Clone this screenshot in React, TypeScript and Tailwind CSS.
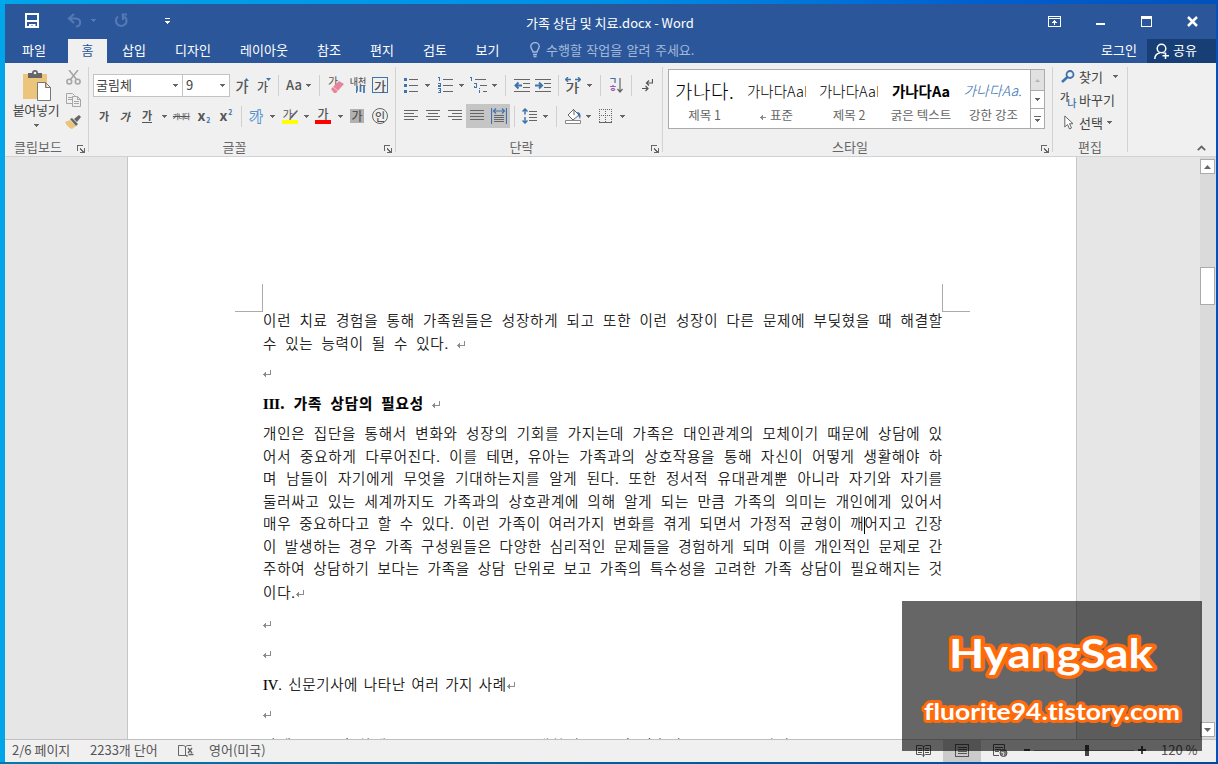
import type { ReactNode } from "react";

const GRAY = "#666666";
const BLUE = "#3f73ab";

const tabs = [
  { label: "삽입", width: "w-[52px]" },
  { label: "디자인", width: "w-[66px]" },
  { label: "레이아웃", width: "w-[76px]" },
  { label: "참조", width: "w-[54px]" },
  { label: "편지", width: "w-[52px]" },
  { label: "검토", width: "w-[54px]" },
  { label: "보기", width: "w-[51px]" },
];

const bodyLines = [
  "개인은 집단을 통해서 변화와 성장의 기회를 가지는데 가족은 대인관계의 모체이기 때문에 상담에 있",
  "어서 중요하게 다루어진다. 이를 테면, 유아는 가족과의 상호작용을 통해 자신이 어떻게 생활해야 하",
  "며 남들이 자기에게 무엇을 기대하는지를 알게 된다. 또한 정서적 유대관계뿐 아니라 자기와 자기를",
  "둘러싸고 있는 세계까지도 가족과의 상호관계에 의해 알게 되는 만큼 가족의 의미는 개인에게 있어서",
  "매우 중요하다고 할 수 있다. 이런 가족이 여러가지 변화를 겪게 되면서 가정적 균형이 깨|어지고 긴장",
  "이 발생하는 경우 가족 구성원들은 다양한 심리적인 문제들을 경험하게 되며 이를 개인적인 문제로 간",
  "주하여 상담하기 보다는 가족을 상담 단위로 보고 가족의 특수성을 고려한 가족 상담이 필요해지는 것",
];

// One slot of a ribbon row, its content is centered
const Cell = ({ w, className = "", children }: { w: string; className?: string; children?: ReactNode }) => (
  <div className={`flex h-[24px] shrink-0 items-center justify-center whitespace-nowrap ${w} ${className}`}>
    {children}
  </div>
);

const Arrow = ({ color = GRAY }: { color?: string }) => (
  <svg width="5" height="3" className="shrink-0" shapeRendering="crispEdges">
    <path d="M0 0h5v1H0zM1 1h3v1H1zM2 2h1v1H2z" fill={color} />
  </svg>
);

const Divider = ({ w }: { w: string }) => (
  <Cell w={w}>
    <div className="h-[21px] w-px bg-[#d0d0d0]" />
  </Cell>
);

const GroupLine = () => <div className="mt-1 h-[85px] w-px shrink-0 bg-[#d2d2d2]" />;

const Launcher = ({ className }: { className: string }) => (
  <svg width="8" height="8" className={`mt-1 shrink-0 ${className}`} shapeRendering="crispEdges">
    <path d="M0.5 6V0.5H6" fill="none" stroke={GRAY} />
    <path d="M3 3h1v1h1v1h1v1h1V3h1v5H3V7h2V6H4V5H3z" fill={GRAY} />
  </svg>
);

// Group caption with its dialog launcher at the right
const GroupLabel = ({ text }: { text: string }) => (
  <div className="mt-1.5 flex h-5 items-center text-[#666]">
    <div className="flex-1 pr-[4px] text-center">{text}</div>
    <Launcher className="mr-[3px]" />
  </div>
);

const Lines = ({ rows }: { rows: [number, number][] }) => (
  <svg width="15" height="13" className="shrink-0" shapeRendering="crispEdges">
    {rows.map(([x, width], i) => (
      <rect key={i} x={x} y={i * 3} width={width} height="1" fill={GRAY} />
    ))}
  </svg>
);

const ReturnMark = ({ className = "" }: { className?: string }) => (
  <svg width="8" height="8" className={`inline-block shrink-0 ${className}`} shapeRendering="crispEdges">
    <path d="M7 0h1v5H7zM1 4h6v1H1zM1 3h2v3H1zM0 4h1v1H0zM2 2h1v5H2z" fill="#8c8c8c" />
  </svg>
);

const Indent = ({ out = false }: { out?: boolean }) => (
  <svg width="17" height="15" className="shrink-0">
    <path d="M0 1.5h16M9 5.5h7M9 9.5h7M0 13.5h16" stroke={GRAY} shapeRendering="crispEdges" />
    <path d={out ? "M8 7.5H2M4.5 4.5l-3 3 3 3" : "M0 7.5h6M4 4.5l3 3-3 3"} stroke={BLUE} strokeWidth="2" fill="none" />
  </svg>
);

const TitleBar = () => (
  <div className="flex h-[35px] shrink-0 items-start text-white">
    <div className="flex w-[170px] items-center pt-[9px] pl-[20px]">
      <svg width="14" height="15" className="shrink-0">
        <path d="M1 1h12v13H1z" fill="none" stroke="#fff" strokeWidth="2" />
        <path d="M2 7h10v2H2zM4 11h6.5v3H8v-1.500H6V14H4z" fill="#fff" />
      </svg>
      <svg width="16" height="15" className="ml-[28px] shrink-0" fill="none" stroke="#5378b4" strokeWidth="2.2">
        <path d="M7 1L2 5.5 7 10M2 5.5h7c5.5 0 5.5 8 0 8" />
      </svg>
      <div className="ml-[8px]">
        <Arrow color="#5378b4" />
      </div>
      <svg width="15" height="15" className="ml-[18px] shrink-0" fill="none" stroke="#5378b4" strokeWidth="2.2">
        <path d="M10.5 3.5A5.3 5.3 0 1 1 4 3.5M7.5 1.5H13M9 1.5V7" />
      </svg>
      <svg width="6" height="6" className="ml-[36px] shrink-0" shapeRendering="crispEdges">
        <path d="M0 0h5v1H0zM0 3h5v1H0zM1 4h3v1H1zM2 5h1v1H2z" fill="#fff" />
      </svg>
    </div>
    <div className="flex-1 pt-[10px] pl-[351px] text-[13px] leading-[18px] whitespace-nowrap">
      가족 상담 및 치료.docx - Word
    </div>
    <div className="flex items-center gap-[35px] pt-[12px] pr-[18px]">
      <svg width="13" height="11" shapeRendering="crispEdges">
        <path d="M.5.5h12v10H.5zM1 2.5h11M6.5 9V4M4 6.5h5M5 5.5h3" fill="none" stroke="#fff" />
      </svg>
      <div className="mt-[4px] h-[2px] w-[9px] bg-white" />
      <div className="ml-px h-[11px] w-[11px] border border-t-[3px] border-white" />
      <svg width="11" height="11" stroke="#fff" strokeWidth="2.5">
        <path d="M1 1l9 9M10 1l-9 9" />
      </svg>
    </div>
  </div>
);

const TabBar = () => (
  <div className="flex h-6 shrink-0 items-stretch text-[13px] leading-[21px] text-white">
    <div className="w-[63px] pr-[5px] text-center">파일</div>
    <div className="mr-px w-[39px] bg-[#f0f0f0] text-center text-[#2b579a]">홈</div>
    {tabs.map((tab) => (
      <div key={tab.label} className={`${tab.width} text-center whitespace-nowrap`}>
        {tab.label}
      </div>
    ))}
    <div className="flex items-start pl-[17px] text-[#a5badb]">
      <svg width="10" height="16" className="mt-[3px]" fill="none" stroke="#a5badb" strokeWidth="1.4">
        <path d="M3 10C3 8 .8 7 .8 4.6a4.2 4 0 0 1 8.4 0C9.2 7 7 8 7 10zM3 12.5h4M3.5 14.5h3" />
      </svg>
      <span className="ml-[6px] [word-spacing:1.5px]">수행할 작업을 알려 주세요.</span>
    </div>
    <div className="ml-auto pr-[10px]">로그인</div>
    <div className="flex w-[69px] items-start bg-[#173f76] pl-[7px]">
      <svg width="16" height="17" className="mt-[4px]" fill="none" stroke="#fff" strokeWidth="1.5">
        <circle cx="7.5" cy="5.5" r="4.3" />
        <path d="M.8 16c0-3 2-5.5 5-6M9 9.5l1.5 1M11.5 9.5V16M8.5 12.8H15" />
      </svg>
      <span className="ml-[3px]">공유</span>
    </div>
  </div>
);

const ClipboardGroup = () => (
  <div className="w-[83px] shrink-0 pt-[7px]">
    <div className="flex h-[61px]">
      <div className="flex w-[57px] flex-col items-center pl-[5px] text-[#444]">
        <svg width="29" height="31" className="mr-[-3px] shrink-0">
          <path d="M0 4h24v25H0z" fill="#ecc57c" />
          <path d="M5 3h4a3 3 0 0 1 6 0h4v5H5z" fill="#666" />
          <circle cx="12" cy="3" r="1.3" fill="#f0f0f0" />
          <path d="M14.5 12.5h8l5 5v13h-13zM22.5 12.5v5h5" fill="#fff" stroke="#777" />
        </svg>
        <span className="text-[13px] leading-[18px] tracking-[-0.3px] whitespace-nowrap">붙여넣기</span>
        <div className="mt-[5px]">
          <Arrow />
        </div>
      </div>
      <div className="flex flex-1 flex-col items-center pr-[4px]">
        <svg width="15" height="15" className="shrink-0" fill="none" stroke="#a6a6a6" strokeWidth="1.6">
          <path d="M3 0l7.5 9.5M12 0L4.5 9.5" />
          <circle cx="3.3" cy="11.6" r="2.4" />
          <circle cx="11.7" cy="11.6" r="2.4" />
        </svg>
        <svg width="15" height="14" className="mt-[8px] shrink-0" fill="#f0f0f0" stroke="#a6a6a6">
          <path d="M.5.5h6l2 2v8h-8zM2 4.5h4M2 6.5h4" />
          <path d="M6.5 3.5h5l3 3v7h-8zM11.5 3.5v3h3M8 8.5h5M8 10.5h5" />
        </svg>
        <svg width="16" height="14" className="mt-[8px] shrink-0">
          <path d="M0 7l5-2 6 6-4 3C4 13 1 10 0 7z" fill="#ecc57c" />
          <path d="M5 4l2-1 6 6-2 2zM9 4l5-4 2 2-4 5z" fill="#666" />
        </svg>
      </div>
    </div>
    <div className="mt-[6px] flex h-5 items-center text-[13px]">
      <div className="w-[66px] text-center text-[#666]">클립보드</div>
      <Launcher className="ml-[6px]" />
    </div>
  </div>
);

const FontGroup = () => (
  <div className="w-[306px] shrink-0 pt-[7px] text-[#555]">
    <div className="flex h-[30px] items-center pl-[4px]">
      <div className="flex h-[23px] w-[90px] items-center justify-between border border-[#c3c3c3] bg-white pr-[4px] pl-[2px] text-[13px] text-[#444]">
        굴림체
        <Arrow />
      </div>
      <div className="flex h-[23px] w-[47px] items-center justify-between border border-l-0 border-[#c3c3c3] bg-white pr-[4px] pl-[3px] text-[13px] text-[#444]">
        9
        <Arrow />
      </div>
      <Cell w="w-[22px]" className="text-[14px] font-medium">
        <span className="mt-[2px] ml-[3px]">가</span>
        <svg width="5" height="3" className="mb-[12px] ml-[-4px] shrink-0">
          <path d="M0 3h5L2.5 0z" fill={BLUE} />
        </svg>
      </Cell>
      <Cell w="w-[22px]" className="text-[12px] font-medium">
        <span className="mt-[3px] ml-[2px]">가</span>
        <svg width="5" height="3" className="mb-[12px] ml-[-2px] shrink-0">
          <path d="M0 0h5L2.5 3z" fill={BLUE} />
        </svg>
      </Cell>
      <Divider w="w-[9px]" />
      <Cell w="w-[20px]" className="pl-[2px] text-[13px] font-medium">Aa</Cell>
      <Cell w="w-[10px]"><Arrow /></Cell>
      <Divider w="w-[12px]" />
      <Cell w="w-[22px]" className="text-[11px]">
        <span className="mb-[7px]">가</span>
        <svg width="13" height="12" className="mt-1 ml-[-7px] shrink-0">
          <path d="M0 8l8-8 5 3-8 9H3z" fill="#e8849a" />
          <path d="M2 6l5 4" stroke="#f6c3cd" />
        </svg>
      </Cell>
      <Cell w="w-[22px]" className="flex-col">
        <span className="text-[9px] leading-[9px] font-medium">내천</span>
        <svg width="9" height="7" className="ml-[4px]">
          <path d="M1 0v4l-1 3M4.5 0v6M8 0v7" stroke={BLUE} strokeWidth="1.7" fill="none" />
        </svg>
      </Cell>
      <Cell w="w-[22px]">
        <div className="flex h-4 w-4 shrink-0 items-center justify-center border border-[#3f73ab] text-[13px] leading-none font-medium">가</div>
      </Cell>
    </div>
    <div className="mt-px flex h-[30px] items-center pl-[4px] text-[11px]">
      <Cell w="w-[22px]" className="font-bold">가</Cell>
      <Cell w="w-[22px]" className="font-bold"><span className="skew-x-[-14deg]">가</span></Cell>
      <Cell w="w-[20px]" className="font-bold">
        <span className="border-b border-[#555] leading-[13px]">가</span>
      </Cell>
      <Cell w="w-[14px]"><Arrow /></Cell>
      <Cell w="w-[20px]" className="text-[7px] font-medium tracking-[-1px]">
        <span className="line-through">가나다</span>
      </Cell>
      <Cell w="w-[24px]" className="pl-[2px] font-bold">
        <span className="mb-[2px] text-[14px]">x</span>
        <span className="mt-[8px] ml-px text-[7px] text-[#3f73ab]">2</span>
      </Cell>
      <Cell w="w-[22px]" className="font-bold">
        <span className="mb-[2px] text-[14px]">x</span>
        <span className="mb-[8px] ml-px text-[7px] text-[#3f73ab]">2</span>
      </Cell>
      <Divider w="w-[9px]" />
      <Cell w="w-[20px]" className="text-[13px] font-medium text-[#f0f6fc] [-webkit-text-stroke:2px_#5b91c9] [paint-order:stroke_fill]">
        가
      </Cell>
      <Cell w="w-[12px]"><Arrow /></Cell>
      <Cell w="w-[24px]" className="flex-col">
        <div className="flex h-[12px] items-center">
          <span className="text-[11px]">가</span>
          <svg width="9" height="11" className="ml-[-4px]">
            <path d="M0 11l2-4 6-6 1 1-6 7z" fill={GRAY} />
          </svg>
        </div>
        <div className="h-[4px] w-4 bg-[#ffff00]" />
      </Cell>
      <Cell w="w-[8px]"><Arrow /></Cell>
      <Cell w="w-[26px]" className="flex-col">
        <span className="h-[12px] text-[12px] leading-[12px] font-medium">가</span>
        <div className="h-[4px] w-4 bg-[#ff0000]" />
      </Cell>
      <Cell w="w-[8px]"><Arrow /></Cell>
      <Cell w="w-[26px]">
        <div className="flex h-[14px] w-[14px] items-center justify-center bg-[#b1b1b1] text-[12px] leading-none font-medium">가</div>
      </Cell>
      <Cell w="w-[22px]" className="pr-[2px]">
        <div className="flex h-4 w-4 shrink-0 items-center justify-center rounded-full border border-[#666] text-[11px] leading-none font-medium">인</div>
      </Cell>
    </div>
    <GroupLabel text="글꼴" />
  </div>
);

const ParagraphGroup = () => (
  <div className="w-[266px] shrink-0 pt-[7px] text-[#555]">
    <div className="flex h-[30px] items-center pl-[4px]">
      <Cell w="w-[20px]" className="pl-px">
        <svg width="14" height="15" className="shrink-0" shapeRendering="crispEdges">
          <path d="M5 1.5h9M5 7.5h9M5 13.5h9" stroke={GRAY} />
          <path d="M0 0h3v3H0zM0 6h3v3H0zM0 12h3v3H0z" fill={BLUE} />
        </svg>
      </Cell>
      <Cell w="w-[14px]"><Arrow /></Cell>
      <Cell w="w-[22px]">
        <svg width="15" height="16" className="shrink-0" shapeRendering="crispEdges">
          <path d="M5 2.5h10M5 8.5h10M5 14.5h10" stroke={GRAY} />
          <path d="M0 .5h1.5V4M0 6.5h2.5V8H.5v1.5H3M0 11.5h2.5v4H0M1 13.5h2" stroke={BLUE} fill="none" />
        </svg>
      </Cell>
      <Cell w="w-[10px]"><Arrow /></Cell>
      <Cell w="w-[24px]">
        <svg width="17" height="16" className="shrink-0" shapeRendering="crispEdges">
          <path d="M5 2.5h11M10 8.5h7M13 14.5h4" stroke={GRAY} />
          <path d="M0 .5h1.5V4M4 6.5h2.5V10M4 8.5V10h3M9.5 11v1M9.5 13v3" stroke={BLUE} fill="none" />
        </svg>
      </Cell>
      <Cell w="w-[8px]"><Arrow /></Cell>
      <Divider w="w-[14px]" />
      <Cell w="w-[20px]"><Indent out /></Cell>
      <Cell w="w-[22px]"><Indent /></Cell>
      <Divider w="w-[8px]" />
      <Cell w="w-[22px]" className="flex-col">
        <svg width="16" height="5" className="shrink-0">
          <path d="M0 2.5h6M3 0L.7 2.5 3 5M10 2.5h6M13 0l2.3 2.5L13 5" stroke={BLUE} strokeWidth="1.4" fill="none" />
        </svg>
        <span className="h-[11px] scale-x-125 text-[12px] leading-[11px] font-medium">가</span>
      </Cell>
      <Cell w="w-[10px]"><Arrow /></Cell>
      <Divider w="w-[12px]" />
      <Cell w="w-[20px]">
        <div className="flex flex-col text-[9px] leading-[8px] font-bold">
          <span className="text-[#3f73ab]">ㄱ</span>
          <span className="text-[#9a55b5]">ㅎ</span>
        </div>
        <svg width="6" height="15">
          <path d="M3 0v14M.5 11L3 14l2.5-3" stroke={GRAY} strokeWidth="1.2" fill="none" />
        </svg>
      </Cell>
      <Divider w="w-[10px]" />
      <Cell w="w-[22px]">
        <svg width="11" height="13" fill="none" stroke="#555" strokeWidth="1.2">
          <path d="M10.5 0v4H5M7 1.5L4.5 4 7 6.5M0 9.5h5.5M3.5 7L6 9.5 3.5 12" />
        </svg>
      </Cell>
    </div>
    <div className="mt-px flex h-[30px] items-center pl-[4px]">
      <Cell w="w-[22px]"><Lines rows={[[0, 14], [0, 10], [0, 14], [0, 10]]} /></Cell>
      <Cell w="w-[22px]"><Lines rows={[[0, 14], [2, 10], [0, 14], [2, 10]]} /></Cell>
      <Cell w="w-[22px]"><Lines rows={[[0, 14], [4, 10], [0, 14], [4, 10]]} /></Cell>
      <Cell w="w-[22px]" className="bg-[#c5c5c5]"><Lines rows={[[0, 14], [0, 14], [0, 14], [0, 14]]} /></Cell>
      <Cell w="w-[22px]" className="bg-[#c5c5c5]">
        <svg width="16" height="16" className="shrink-0">
          <path d="M3 7.5h10M3 9.5h10M3 11.5h10M3 13.5h10" stroke={GRAY} shapeRendering="crispEdges" />
          <path d="M.5 0v16M15.5 0v16M2.500 3h11M5 .5L2.5 3 5 5.5M11 .5L13.5 3 11 5.5" stroke={BLUE} strokeWidth="1.2" fill="none" />
        </svg>
      </Cell>
      <Divider w="w-[8px]" />
      <Cell w="w-[24px]">
        <svg width="16" height="16" className="shrink-0">
          <path d="M7 3.5h8M7 6.5h8M7 9.5h8M7 12.5h8" stroke={GRAY} shapeRendering="crispEdges" />
          <path d="M3 1v5.5M3 9v6M.5 3.5L3 1l2.5 2.5M.5 12.5L3 15l2.5-2.5" stroke={BLUE} strokeWidth="1.5" fill="none" />
        </svg>
      </Cell>
      <Cell w="w-[6px]"><Arrow /></Cell>
      <Divider w="w-[16px]" />
      <Cell w="w-[18px]">
        <svg width="17" height="16" className="shrink-0">
          <path d="M9 1L3 7l5 5 6-5-5-5v5" fill="#fff" stroke={GRAY} />
          <path d="M12 4c4 0 4 4 3 7l-2-4z" fill={BLUE} />
          <path d="M.5 12.5h15v3H.5z" fill="#fff" stroke="#888" />
        </svg>
      </Cell>
      <Cell w="w-[12px]"><Arrow /></Cell>
      <Cell w="w-[24px]">
        <svg width="14" height="14" className="shrink-0" shapeRendering="crispEdges">
          <path d="M0 .5h13M0 6.5h13M.5 0v13M6.5 0v13M12.5 0v13" stroke={GRAY} strokeDasharray="1 1" />
          <path d="M0 13.5h13" stroke={GRAY} />
        </svg>
      </Cell>
      <Cell w="w-[8px]"><Arrow /></Cell>
    </div>
    <GroupLabel text="단락" />
  </div>
);

const StylesGroup = () => (
  <div className="w-[389px] shrink-0 pt-[6px]">
    <div className="ml-[5px] flex h-[60px] w-[377px] border border-[#ababab] bg-white text-[12.5px] text-[#666]">
      <div className="flex w-[361px] text-center whitespace-nowrap">
        <div className="w-[71px] pt-[7px]">
          <div className="ml-[6px] h-[29px] w-[60px] overflow-hidden text-left text-[19px] leading-[27px] font-light tracking-[0.5px] text-black">가나다.</div>
          <div className="leading-[18px]">제목 1</div>
        </div>
        <div className="w-[73px] pt-[7px]">
          <div className="ml-[7px] h-[29px] w-[59px] overflow-hidden text-left text-[14.5px] leading-[27px] font-light text-black">가나다AaB</div>
          <div className="flex items-center justify-center leading-[18px]">
            <ReturnMark className="mt-1 mr-[4px] w-[6px]" />
            표준
          </div>
        </div>
        <div className="w-[72px] pt-[7px]">
          <div className="ml-[6px] h-[29px] w-[59px] overflow-hidden text-left text-[14.5px] leading-[27px] font-light text-black">가나다AaB</div>
          <div className="leading-[18px]">제목 2</div>
        </div>
        <div className="w-[72px] pt-[7px]">
          <div className="h-[29px] text-[14.5px] leading-[27px] font-bold text-black">가나다Aa</div>
          <div className="leading-[18px]">굵은 텍스트</div>
        </div>
        <div className="w-[73px] pt-[7px]">
          <div className="h-[29px] skew-x-[-14deg] text-[14px] leading-[27px] font-light text-[#2e6cae]">가나다Aa.</div>
          <div className="leading-[18px]">강한 강조</div>
        </div>
      </div>
      <div className="flex flex-1 flex-col border-l border-[#ababab]">
        <div className="flex h-[20px] items-center justify-center bg-[#e1e1e1]">
          <svg width="5" height="3"><path d="M0 3h5L2.5 0z" fill="#b5b5b5" /></svg>
        </div>
        <div className="flex h-[19px] items-center justify-center border-y border-[#ababab]"><Arrow /></div>
        <div className="flex flex-1 flex-col items-center justify-center gap-[2px]">
          <div className="h-px w-[7px] bg-[#666]" />
          <Arrow />
        </div>
      </div>
    </div>
    <div className="pt-[2px]">
      <GroupLabel text="스타일" />
    </div>
  </div>
);

const EditGroup = () => (
  <div className="w-[74px] shrink-0 pt-[2px] text-[13px] text-[#444]">
    <div className="flex h-[23px] items-center pl-[8px]">
      <svg width="15" height="13" className="shrink-0" fill="none" stroke={BLUE}>
        <circle cx="9" cy="4.5" r="3.5" strokeWidth="1.8" />
        <path d="M6.5 7L1 12" strokeWidth="2.5" />
      </svg>
      <span className="ml-[3px] w-[34px]">찾기</span>
      <Arrow />
    </div>
    <div className="flex h-[23px] items-center pl-[7px] whitespace-nowrap">
      <div className="flex w-[16px] shrink-0 text-[10px] leading-none font-medium">
        <span className="mb-[5px]">가</span>
        <span className="mt-[6px] -ml-[2px] text-[#3f73ab]">나</span>
      </div>
      <span className="ml-[3px]">바꾸기</span>
    </div>
    <div className="flex h-[23px] items-center pl-[11px]">
      <svg width="10" height="15" className="shrink-0" fill="#fff" stroke="#666">
        <path d="M.8 1v11l2.7-2.5 2 4.5 2-1-2-4.300H9z" />
      </svg>
      <span className="mr-[4px] ml-[5px]">선택</span>
      <Arrow />
    </div>
    <div className="mt-[3px] flex h-5 items-center justify-center text-[#666]">편집</div>
  </div>
);

const Ribbon = () => (
  <div className="flex h-[94px] shrink-0 border-b border-[#d2d2d2] bg-[#f0f0f0] text-[13px]">
    <ClipboardGroup />
    <GroupLine />
    <FontGroup />
    <GroupLine />
    <ParagraphGroup />
    <GroupLine />
    <StylesGroup />
    <GroupLine />
    <EditGroup />
    <GroupLine />
    <svg width="9" height="6" className="mt-[82px] mr-[10px] ml-auto" fill="none" stroke="#666" strokeWidth="1.8">
      <path d="M.8 5.2l3.7-3.7 3.7 3.7" />
    </svg>
  </div>
);

// A full line of a justified paragraph, "|" marks the text cursor
const Line = ({ text }: { text: string }) => {
  const [before, after] = text.split("|");
  return (
    <div className="h-[22.5px] w-[680px] whitespace-nowrap [text-align-last:justify]">
      {before}
      {after && <span className="-mr-px inline-block h-[17px] w-px bg-black align-middle" />}
      {after}
    </div>
  );
};

const Page = () => (
  <div className="ml-[122px] w-[950px] shrink-0 overflow-hidden border-x border-[#c6c6c6] bg-white">
    {/* Margin corners */}
    <div className="flex justify-between pt-[127px] pr-[106px] pl-[107px]">
      <div className="h-[28px] w-[28px] border-r border-b border-[#ababab]" />
      <div className="h-[28px] w-[28px] border-b border-l border-[#ababab]" />
    </div>
    <div className="-mt-[3px] pl-[135px] text-[14.5px] leading-[22.5px] font-light tracking-[0.8px] text-black [-webkit-text-stroke:0.2px_black]">
      <Line text="이런 치료 경험을 통해 가족원들은 성장하게 되고 또한 이런 성장이 다른 문제에 부딪혔을 때 해결할" />
      <div className="h-[22.5px] [word-spacing:4px]">
        수 있는 능력이 될 수 있다. <ReturnMark />
      </div>
      <div className="flex h-[38px] items-center pt-[2px]"><ReturnMark /></div>
      <div className="mb-[8px] h-[22px] font-bold tracking-[0.9px] [word-spacing:4px]">
        <span className="font-['Liberation_Serif'] tracking-normal">III</span>. 가족 상담의 필요성 <ReturnMark />
      </div>
      {bodyLines.map((line) => (
        <Line key={line} text={line} />
      ))}
      <div className="h-[29px] pt-[1px]">이다.<ReturnMark /></div>
      <div className="flex h-[30px] items-center pt-[2px]"><ReturnMark /></div>
      <div className="flex h-[30px] items-center pt-[2px]"><ReturnMark /></div>
      <div className="h-[30px] leading-[30px] tracking-[0.6px] [word-spacing:2px]">
        <span className="font-['Liberation_Serif'] tracking-normal">IV</span>. 신문기사에 나타난 여러 가지 사례<ReturnMark />
      </div>
      <div className="flex h-[30px] items-center pt-[2px]"><ReturnMark /></div>
      <div className="flex h-[30px] pt-[5px] tracking-[1.5px] whitespace-nowrap [word-spacing:2px]">
        <span className="w-[273px]">사례 1) 논의 학대</span>
        <span className="w-[210px]">대한민국 논의 적출산</span>
        <span>조선일보 2000.04.04 (금)</span>
      </div>
    </div>
  </div>
);

const ScrollBar = () => (
  <div className="ml-auto flex w-[16px] shrink-0 flex-col bg-[#dadada] pt-[2px]">
    <div className="flex h-[15px] w-[15px] items-center justify-center border border-[#ababab] bg-white">
      <svg width="7" height="4"><path d="M0 4h7L3.5 0z" fill="#666" /></svg>
    </div>
    <div className="mt-[93px] h-[38px] w-[15px] border border-[#ababab] bg-white" />
    <div className="mt-auto mb-[2px] flex h-[15px] w-[15px] items-center justify-center border border-[#ababab] bg-white">
      <svg width="7" height="4"><path d="M0 0h7L3.5 4z" fill="#666" /></svg>
    </div>
  </div>
);

const StatusBar = () => (
  <div className="flex h-[23px] shrink-0 items-center border-t border-[#c0c0c0] bg-[#f0f0f0] pb-[2px] text-[13px] text-[#555]">
    <span className="w-[85px] pl-[7px] whitespace-nowrap">2/6 페이지</span>
    <span className="w-[88px] whitespace-nowrap">2233개 단어</span>
    <svg width="16" height="13" fill="none" stroke="#666">
      <path d="M7.5 2v9.5H.5v-10h5l2 1 2-1h4M7.5 11.5h2M7.5 11l2 2" />
      <path d="M10 4l4 5M14 4l-4 5M10.5 10.5h5" strokeWidth="1.4" />
    </svg>
    <span className="ml-[15px] whitespace-nowrap">영어(미국)</span>
    <svg width="15" height="13" className="ml-auto" fill="none" stroke="#555">
      <path d="M7.5 2v11M.5 1.5h5l2 1 2-1h5v9h-5l-2 1-2-1h-5zM2 4.5h4M2 6.5h4M2 8.5h4M9 4.5h4M9 6.5h4M9 8.5h4" />
    </svg>
    <div className="-mb-[2px] ml-[12px] flex h-[22px] w-[38px] items-center justify-center bg-[#cbcbcb] pb-[2px]">
      <svg width="15" height="13" fill="none" stroke="#555" shapeRendering="crispEdges">
        <path d="M.5.5h13v12H.5zM3 3.5h9M3 5.5h9M3 7.5h9M3 9.5h9" />
      </svg>
    </div>
    <svg width="15" height="13" className="ml-[12px]" fill="none" stroke="#555">
      <path d="M6 11.5H.5V.5h11V5M2 3.5h8M2 5.5h6M2 7.5h4" />
      <circle cx="10.5" cy="9" r="3.5" fill="#777" />
      <path d="M8 8l3 1-1 3" stroke="#ddd" />
    </svg>
    <div className="ml-[16px] h-[2px] w-[6px] bg-[#444]" />
    <div className="ml-[4px] flex h-[12px] w-[100px] items-center bg-[linear-gradient(#999,#999)] bg-[length:100%_1px] bg-center bg-no-repeat">
      <div className="ml-[51px] h-[11px] w-[4px] bg-[#444]" />
    </div>
    <svg width="8" height="8" className="ml-[4px]" stroke="#444" strokeWidth="2">
      <path d="M0 4h8M4 0v8" />
    </svg>
    <span className="ml-[15px] w-[55px] text-[13px] whitespace-nowrap">120 %</span>
  </div>
);

const Watermark = () => (
  <div className="absolute top-[601px] left-[902px] h-[150px] w-[300px] bg-black/60">
    <svg
      width="300"
      height="150"
      className="font-['Lato'] font-bold [font-variant-ligatures:none] [paint-order:stroke_fill]"
      fill="#fff"
      stroke="#ff6a0a"
      strokeLinejoin="round"
    >
      <text x="47" y="67" fontSize="40" textLength="204" lengthAdjust="spacingAndGlyphs" strokeWidth="7">HyangSak</text>
      <text x="22" y="119" fontSize="23.5" textLength="256" lengthAdjust="spacingAndGlyphs" strokeWidth="6">fluorite94.tistory.com</text>
    </svg>
  </div>
);

export default function App() {
  return (
    <div className="relative h-[764px] w-[1218px] overflow-hidden bg-[linear-gradient(90deg,#00a5ea,#008fe6_50%,#0060d0_80%,#0052bd)] font-['Noto_Sans_CJK_KR',sans-serif]">
      <div className="flex h-full flex-col bg-[linear-gradient(90deg,#0079ad,#005f9e_50%,#0048a0)] bg-[length:100%_2px] bg-bottom bg-no-repeat pt-[4px] pr-[2px] pb-[2px] pl-[5px]">
        <div className="flex flex-1 flex-col bg-[#2b579a]">
          <TitleBar />
          <TabBar />
          <Ribbon />
          <div className="flex h-[582px] overflow-hidden bg-[#e6e6e6]">
            <Page />
            <ScrollBar />
          </div>
          <StatusBar />
        </div>
      </div>
      <Watermark />
    </div>
  );
}
